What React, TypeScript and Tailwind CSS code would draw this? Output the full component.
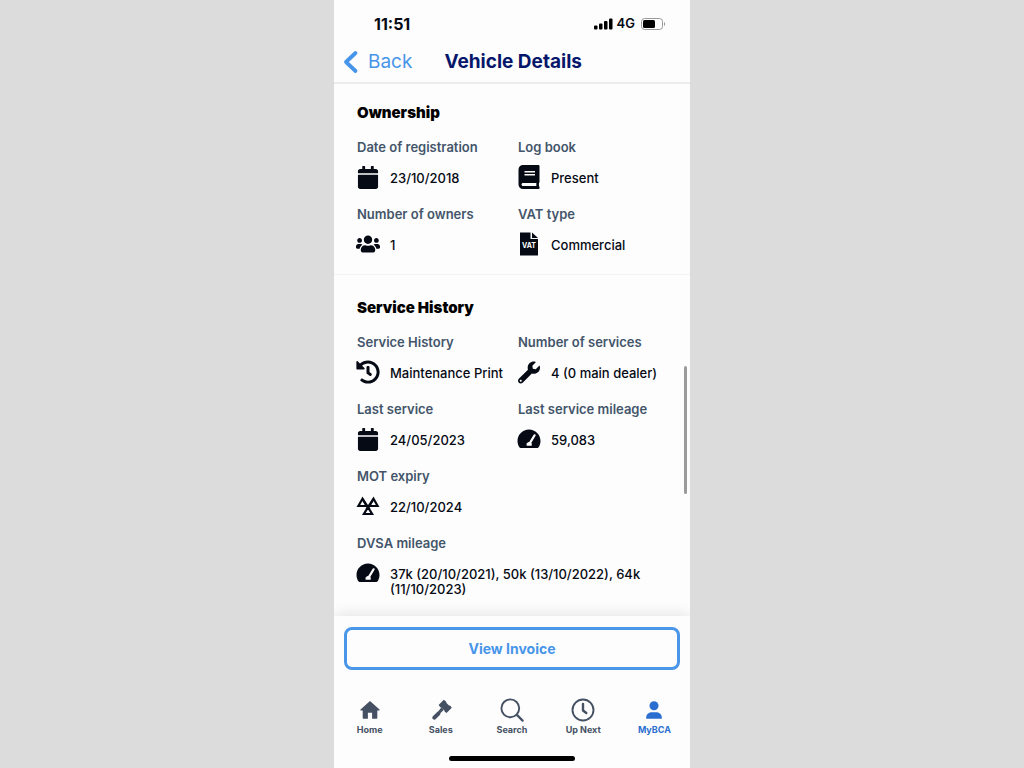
import type { ReactNode } from "react";
import { FaBook, FaCalendar, FaHistory, FaUsers, FaWrench } from "react-icons/fa";

interface IDetail {
  label: string;
  value: string;
  icon: ReactNode;
  wide?: boolean;
}

interface ISection {
  title: string;
  details: IDetail[];
}

function GaugeIcon() {
  return (
    <svg viewBox="0 0 24 20" className="w-6 h-5 shrink-0" aria-hidden="true">
      <path
        d="M12 .5C5.600.5.500 5.700.500 12c0 2.300.7 4.500 1.900 6.300.3.500.7.700 1.200.700h16.800c.5 0 .9-.2 1.200-.7 1.200-1.800 1.900-4 1.900-6.300C23.500 5.700 18.400.5 12 .5z"
        fill="currentColor"
      />
      <path d="M17.600 6.300l-4.600 7.600" stroke="#fff" strokeWidth="2.200" strokeLinecap="round" />
      <path d="M9.700 16.800a2.700 2.700 0 0 1 2.600-3.700 2.700 2.700 0 0 1 2.300 3.700z" fill="#fff" />
    </svg>
  );
}

function MotIcon() {
  return (
    <svg
      viewBox="0 0 24 20"
      className="w-6 h-5 shrink-0"
      fill="none"
      stroke="currentColor"
      strokeWidth="2.200"
      aria-hidden="true"
    >
      <path d="M6.500 2.800L2.400 10h8.200zM17.500 2.800L13.400 10h8.200zM12 11.200L7.900 18h8.200z" />
      <path d="M6.500 2.800l7 10.500M17.500 2.800l-7 10.500" />
    </svg>
  );
}

function VatIcon() {
  return (
    <svg viewBox="0 0 18 24" className="w-[18px] h-6 shrink-0" aria-hidden="true">
      <path d="M0 .5h10.500v6.500H18V23.500H0z" fill="currentColor" />
      <path d="M12 .5L18 6h-6z" fill="currentColor" />
      <text
        x="9"
        y="15.500"
        textAnchor="middle"
        fill="#fff"
        className="text-[7px] font-bold font-['Inter',sans-serif]"
      >
        VAT
      </text>
    </svg>
  );
}

const sections: ISection[] = [
  {
    title: "Ownership",
    details: [
      { label: "Date of registration", value: "23/10/2018", icon: <FaCalendar size={23} /> },
      { label: "Log book", value: "Present", icon: <FaBook size={24} /> },
      { label: "Number of owners", value: "1", icon: <FaUsers size={24} className="shrink-0" /> },
      { label: "VAT type", value: "Commercial", icon: <VatIcon /> },
    ],
  },
  {
    title: "Service History",
    details: [
      {
        label: "Service History",
        value: "Maintenance Print",
        icon: <FaHistory size={24} className="shrink-0" />,
      },
      { label: "Number of services", value: "4 (0 main dealer)", icon: <FaWrench size={23} /> },
      { label: "Last service", value: "24/05/2023", icon: <FaCalendar size={23} /> },
      { label: "Last service mileage", value: "59,083", icon: <GaugeIcon /> },
      { label: "MOT expiry", value: "22/10/2024", icon: <MotIcon />, wide: true },
      {
        label: "DVSA mileage",
        value: "37k (20/10/2021), 50k (13/10/2022), 64k (11/10/2023)",
        icon: <GaugeIcon />,
        wide: true,
      },
    ],
  },
];

const tabs = [
  {
    name: "Home",
    icon: (
      <path
        d="M12 3L2.500 11.600c-.4.400-.2.900.3.900h1.900v7.200c0 .6.400 1 1 1h4.200v-5.900h4.200v5.900h4.200c.6 0 1-.4 1-1v-7.200h1.900c.5 0 .7-.5.3-.9z"
        fill="currentColor"
      />
    ),
  },
  {
    name: "Sales",
    icon: (
      <g fill="currentColor">
        <path d="M14.800 1.800l2.200 1.700.5 1.500 2.200 2.200 1.600.5 1.500 2-5.200 5.300-2-1.500-.5-1.600-2.200-2.200-1.600-.5-1.700-2.200z" />
        <path d="M12.500 9.300l2.400 2.400-3.300 3.400-.5 1.700-4.300 4.300c-.9.900-2.100.9-2.900 0s-.9-2 0-2.900l4.300-4.300 1.400-.8z" />
      </g>
    ),
  },
  {
    name: "Search",
    icon: (
      <g fill="none" stroke="currentColor" strokeWidth="1.900" strokeLinecap="round">
        <circle cx="10.300" cy="10.300" r="8.900" />
        <path d="M16.900 16.900l5.700 5.700" strokeWidth="2.200" />
      </g>
    ),
  },
  {
    name: "Up Next",
    icon: (
      <g fill="none" stroke="currentColor" strokeWidth="1.900" strokeLinecap="round">
        <circle cx="12" cy="12" r="10.500" />
        <path d="M12 6v6.500l3.300 2.500" strokeWidth="2.400" strokeLinejoin="round" />
      </g>
    ),
  },
  {
    name: "MyBCA",
    active: true,
    icon: (
      <g fill="currentColor">
        <circle cx="12" cy="7.700" r="4.500" />
        <path d="M4.200 20.700v-1.300c0-3.400 3-5.200 5.800-5.200h4c2.800 0 5.800 1.800 5.800 5.200v1.300z" />
      </g>
    ),
  },
];

function StatusBar() {
  return (
    <div className="flex items-center justify-between h-11 pt-1 pl-10 pr-6">
      <span className="text-base font-bold">11:51</span>
      <div className="flex items-center gap-1">
        <svg viewBox="0 0 19 12" className="w-[19px] h-3" aria-hidden="true">
          <rect x="0" y="7.500" width="3.500" height="4" rx="1" />
          <rect x="5" y="5.500" width="3.500" height="6" rx="1" />
          <rect x="10" y="3" width="3.500" height="8.500" rx="1" />
          <rect x="15" y="0.500" width="3.500" height="11" rx="1" />
        </svg>
        <span className="text-[13px] font-semibold">4G</span>
        <svg viewBox="0 0 25 12" className="w-[25px] h-3 ml-0.5" aria-hidden="true">
          <rect x="0.500" y="0.500" width="21" height="11" rx="3" fill="none" stroke="#9a9a9a" />
          <rect x="2" y="2" width="12" height="8" rx="1.500" />
          <path d="M23 4c1.600.5 1.600 3.500 0 4z" fill="#9a9a9a" />
        </svg>
      </div>
    </div>
  );
}

function Detail({ label, value, icon, wide }: IDetail) {
  return (
    <div className={wide ? "col-span-2" : ""}>
      <dt className="text-[13px] leading-4 font-semibold text-[#43556a]">{label}</dt>
      <dd className="flex gap-[11px] mt-[10px] h-[25px]">
        <span className="flex items-center justify-center w-[22px] h-6 shrink-0">{icon}</span>
        <span className="pt-[6px] text-[13px] leading-[15px] font-medium">{value}</span>
      </dd>
    </div>
  );
}

export default function App() {
  return (
    <div className="flex justify-center h-screen bg-[#dcdcdc] font-['Inter',sans-serif]">
      <div className="flex flex-col w-full max-w-[356px] bg-[#fdfdfd] text-[#050a14]">
        <StatusBar />
        <header className="flex items-center h-10 pb-0.5 border-b-2 border-[#ececee]">
          <a href="#back" className="flex items-center gap-2 pl-2 text-[19px] text-[#4795ea]">
            <svg viewBox="0 0 18 24" className="w-[18px] h-6" fill="none" aria-hidden="true">
              <path
                d="M13.500 3L4 12l9.500 9"
                stroke="currentColor"
                strokeWidth="3.800"
                strokeLinecap="round"
                strokeLinejoin="round"
              />
            </svg>
            Back
          </a>
          <h1 className="ml-8 text-[19px] font-bold text-[#06166b]">Vehicle Details</h1>
        </header>

        <main className="relative flex-1 overflow-hidden">
          {sections.map((section) => (
            <section
              key={section.title}
              className="pt-[19px] pb-[17px] pl-[23px] pr-[11px] border-b border-[#f3f3f5] last-of-type:border-b-0 [&+&]:pt-[23px]"
            >
              <h2 className="text-[15px] leading-5 font-black text-black">{section.title}</h2>
              <dl className="grid grid-cols-2 gap-y-4 mt-4">
                {section.details.map((detail) => (
                  <Detail key={detail.label} {...detail} />
                ))}
              </dl>
            </section>
          ))}
          <div className="absolute right-[3px] top-[282px] w-[3px] h-32 rounded-full bg-[#9b9b9c]" />
        </main>

        <div className="relative px-[10px] pt-[11px] shadow-[0_-2px_14px_rgba(0,0,0,0.1)] [clip-path:inset(-20px_0_0_0)]">
          <button
            type="button"
            className="w-full h-[43px] border-[3px] border-[#4a96e8] rounded-lg text-[14px] font-bold text-[#4795ea] cursor-pointer"
          >
            View Invoice
          </button>
        </div>

        <nav className="grid grid-cols-5 pt-7">
          {tabs.map((tab) => (
            <a
              key={tab.name}
              href={`#${tab.name}`}
              className={`flex flex-col items-center text-[9px] leading-4 font-bold ${
                tab.active ? "text-[#2a6fd0]" : "text-[#455163]"
              }`}
            >
              <svg viewBox="0 0 24 24" className="w-6 h-6" aria-hidden="true">
                {tab.icon}
              </svg>
              {tab.name}
            </a>
          ))}
        </nav>
        <div className="self-center w-[126px] h-[5px] mt-[18px] mb-[7px] rounded-full bg-black" />
      </div>
    </div>
  );
}
